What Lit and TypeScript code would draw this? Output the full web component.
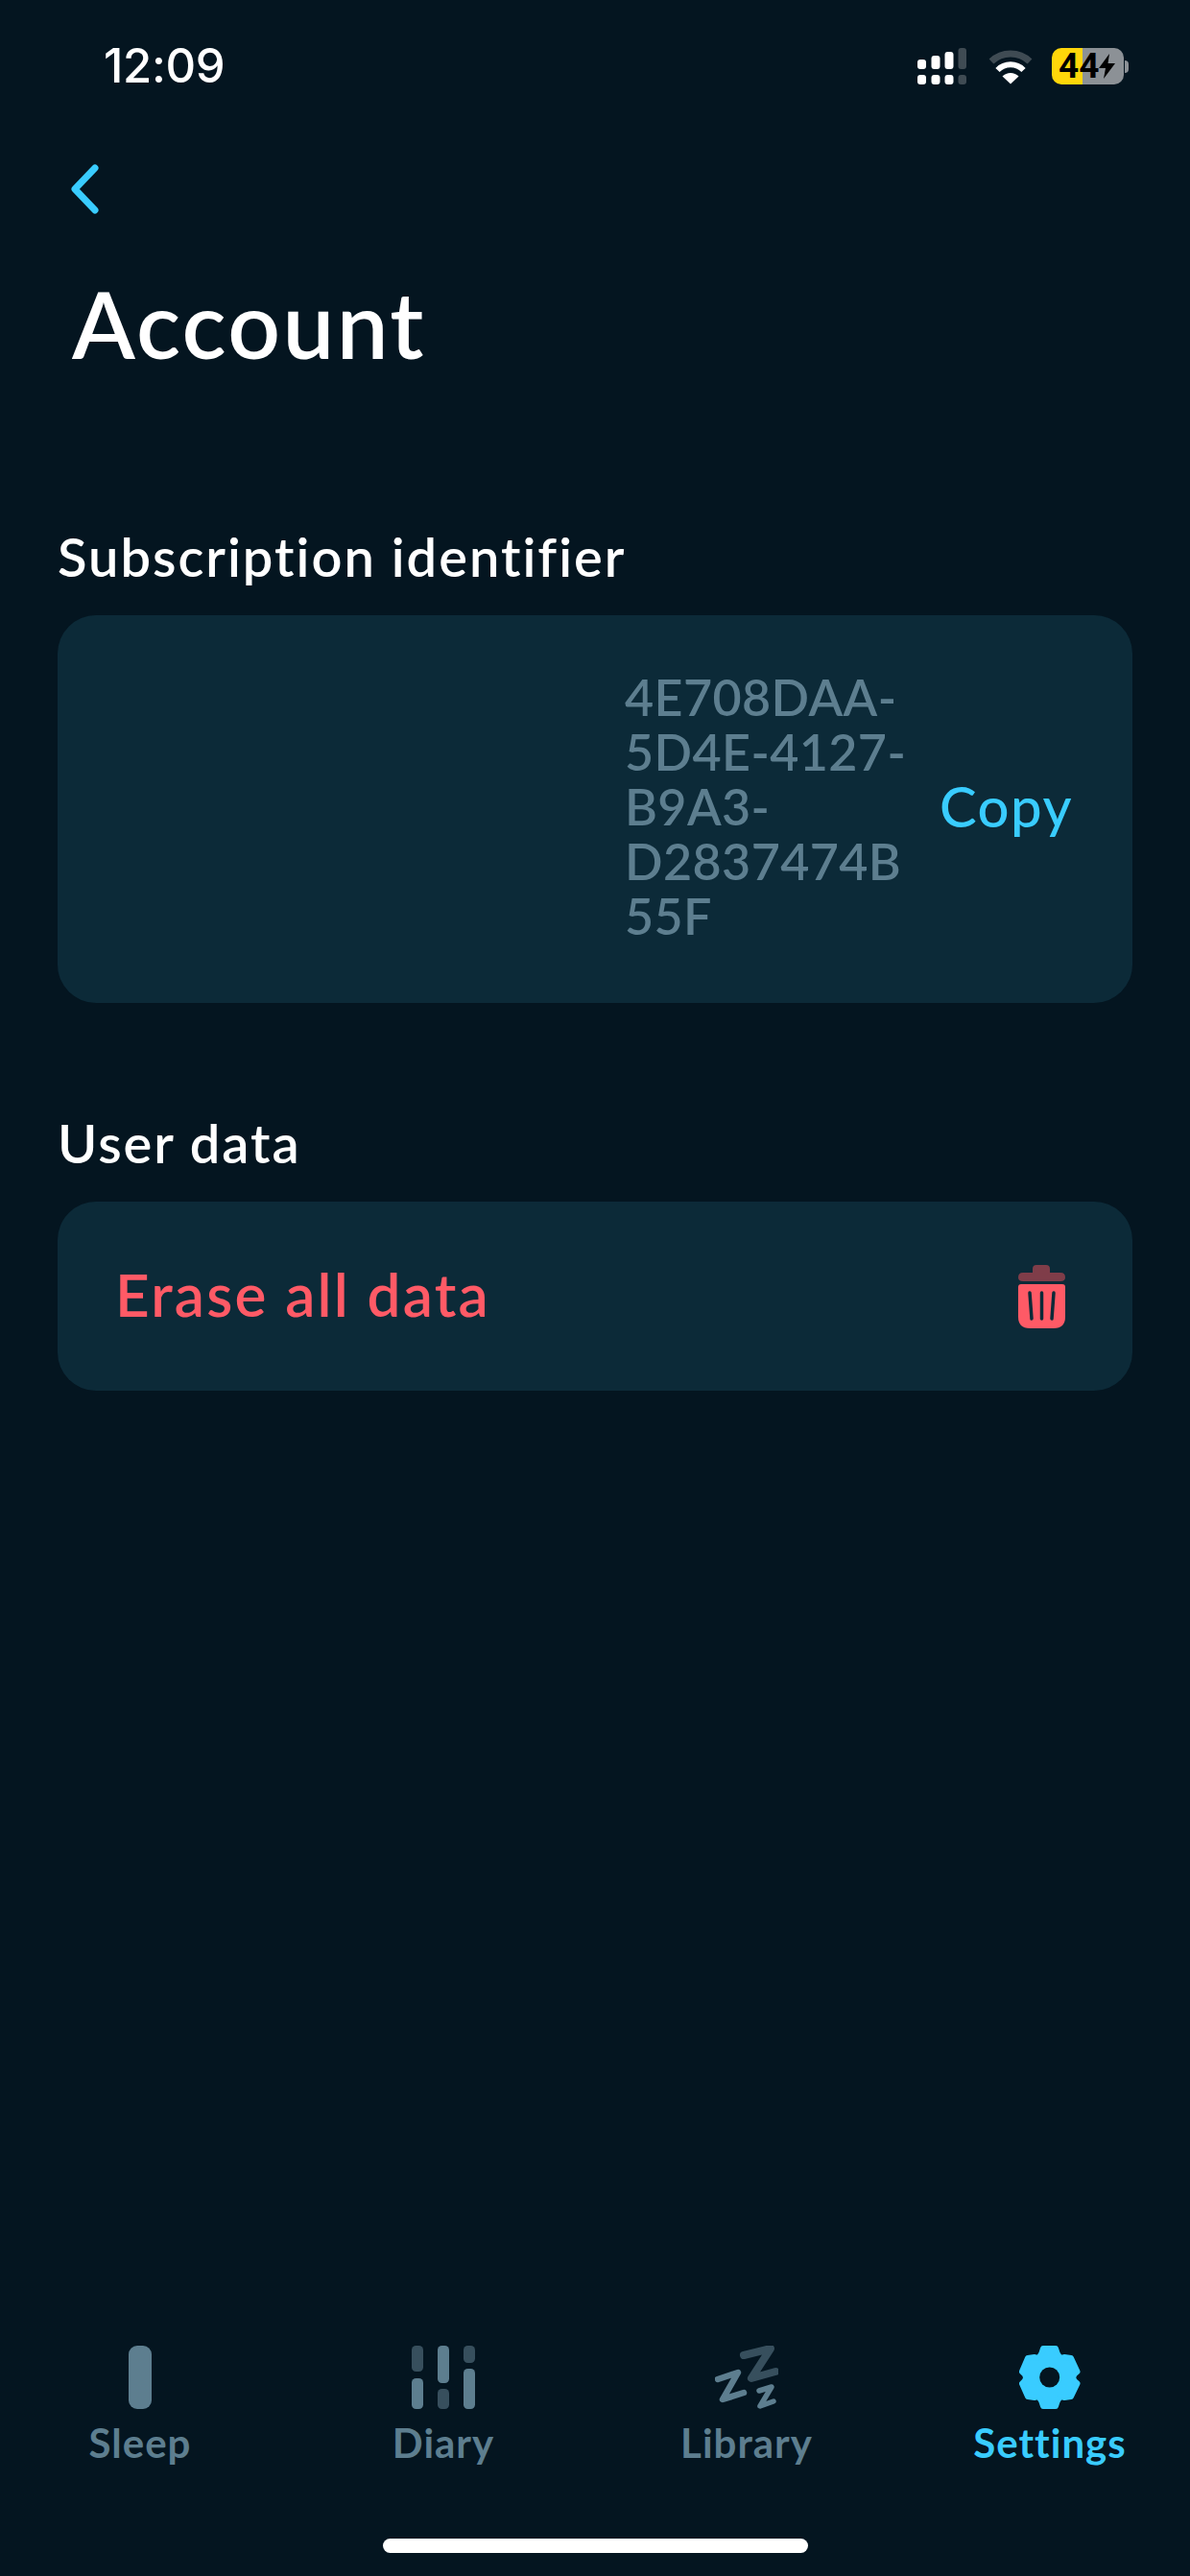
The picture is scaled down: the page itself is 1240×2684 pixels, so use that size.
import {LitElement, html, css, svg, unsafeCSS} from 'lit';
import {customElement} from 'lit/decorators.js';

const MUTED = '#5d7e8f';
const DIM = '#374f5d';
const ACCENT = '#39ccff';

const ICONS: Record<string, unknown> = {
  sleep: svg`<rect x="21" y="0" width="24" height="66" rx="9" fill="${MUTED}"/>`,
  diary: svg`
    <rect x="6" y="0" width="12" height="27" rx="4.5" fill="${DIM}"/>
    <rect x="6" y="34" width="12" height="32" rx="4.5" fill="${MUTED}"/>
    <rect x="33" y="0" width="12" height="39" rx="4.5" fill="${MUTED}"/>
    <rect x="33" y="45" width="12" height="21" rx="4.5" fill="${DIM}"/>
    <rect x="60" y="0" width="12" height="18" rx="4.5" fill="${DIM}"/>
    <rect x="60" y="24" width="12" height="42" rx="4.5" fill="${MUTED}"/>`,
  library: svg`
    <g fill="none" stroke-linecap="round" stroke-linejoin="round">
      <path d="M30 10 L58 3 L38 34 L63 27" stroke="${DIM}" stroke-width="8"/>
      <path d="M3 35 L24 28 L8 56 L30 49" stroke="${MUTED}" stroke-width="6.5"/>
      <path d="M46 47 L59 43 L47 63 L61 58" stroke="${MUTED}" stroke-width="5.5"/>
    </g>`,
  settings: svg`
    <path d="M25 3 H38 Q41 15 47 12 L54 13 L60.5 27 Q52 33 60.5 39.5 L54 53 L47 54 Q41 51 38 63 H25 Q22 51 16 54 L9 53 L3 39.5 Q11 33 3 27 L9 13 L16 12 Q22 15 25 3 Z"
      fill="${ACCENT}" stroke="${ACCENT}" stroke-width="6" stroke-linejoin="round"/>
    <circle cx="31.7" cy="33" r="10.5" fill="#041520"/>`,
};

const TABS = [
  {id: 'sleep', label: 'Sleep', box: '0 0 66 66', w: 66},
  {id: 'diary', label: 'Diary', box: '0 0 78 66', w: 78},
  {id: 'library', label: 'Library', box: '0 0 66 66', w: 66},
  {id: 'settings', label: 'Settings', box: '0 0 64 66', w: 64, active: true},
];

@customElement('app-root')
export class AppRoot extends LitElement {
  static styles = css`
    :host {
      display: block;
      font-family: Lato, 'Noto Sans', sans-serif;
    }
    .screen {
      display: flex;
      flex-direction: column;
      height: 2684px;
      background: #041520;
      color: #fff;
      overflow: hidden;
    }

    .status {
      display: flex;
      align-items: center;
      height: 48px;
      padding: 45px 0 0 108px;
    }
    .time {
      font-family: Inter, sans-serif;
      font-size: 49px;
      font-weight: 500;
      line-height: 48px;
      letter-spacing: -0.3px;
    }
    .status-icons {
      display: flex;
      align-items: center;
      margin-left: auto;
      margin-right: 64px;
    }
    .signal {
      display: block;
      margin-right: 22px;
    }
    .wifi {
      display: block;
      margin-right: 19px;
    }
    .battery {
      display: flex;
      align-items: center;
      justify-content: flex-start;
      width: 75px;
      height: 38px;
      padding-left: 7px;
      box-sizing: border-box;
      border-radius: 10px;
      background: linear-gradient(90deg, #ffd60a 43%, #8c9196 43%);
      color: #000;
      font-family: Roboto, sans-serif;
      font-size: 37px;
      font-weight: 700;
      line-height: 38px;
    }
    .nub {
      width: 4px;
      height: 13px;
      margin-left: 1px;
      border-radius: 0 4px 4px 0;
      background: #8c9196;
    }

    .back {
      display: block;
      margin: 78px 0 0 73px;
    }
    h1 {
      margin: 59px 0 0 75px;
      font-size: 96px;
      font-weight: 600;
      line-height: 110px;
      letter-spacing: 2.4px;
    }

    .section {
      padding: 0 60px;
    }
    .section.first {
      margin-top: 156px;
    }
    .section.second {
      margin-top: 114px;
    }
    .section-label {
      height: 93px;
      font-size: 56px;
      font-weight: 600;
      line-height: 64px;
      letter-spacing: 2px;
    }
    .card {
      background: #0c2a38;
      border-radius: 40px;
    }
    .id-card {
      display: flex;
      align-items: center;
      justify-content: flex-end;
      height: 404px;
      padding: 0 62px 6px 0;
      box-sizing: border-box;
    }
    .id-value {
      width: 328px;
      color: ${unsafeCSS(MUTED)};
      font-size: 52px;
      font-weight: 600;
      line-height: 57px;
      letter-spacing: 0.4px;
    }
    .copy {
      color: ${unsafeCSS(ACCENT)};
      font-size: 58px;
      font-weight: 500;
      line-height: 64px;
      letter-spacing: 1.5px;
    }
    .erase-card {
      display: flex;
      align-items: center;
      justify-content: space-between;
      height: 197px;
      padding: 0 70px 0 60px;
      color: #ff5a66;
      font-size: 62px;
      font-weight: 600;
      letter-spacing: 2.2px;
    }
    .erase-label {
      margin-bottom: 5px;
    }
    .trash {
      display: block;
    }

    .tabs {
      display: grid;
      grid-template-columns: repeat(4, 316px);
      justify-content: center;
      margin-top: auto;
    }
    .tab {
      display: flex;
      flex-direction: column;
      align-items: center;
      color: ${unsafeCSS(MUTED)};
      font-size: 42px;
      font-weight: 700;
      line-height: 50px;
      letter-spacing: 1px;
    }
    .tab.active {
      color: ${unsafeCSS(ACCENT)};
    }
    .tab svg {
      display: block;
      margin-bottom: 10px;
    }

    .home-row {
      display: flex;
      justify-content: center;
      padding: 75px 0 24px;
    }
    .home {
      width: 443px;
      height: 15px;
      border-radius: 8px;
      background: #fff;
    }
  `;

  renderStatus() {
    return html`
      <div class="status">
        <span class="time">12:09</span>
        <div class="status-icons">
          <svg class="signal" width="51" height="38" viewBox="0 0 51 38">
            <g fill="#fff">
              <rect x="0" y="12" width="9" height="10" rx="3"/>
              <rect x="14.5" y="8" width="9" height="14" rx="3"/>
              <rect x="28.5" y="4" width="9" height="18" rx="3"/>
              <rect x="0" y="28" width="9" height="10" rx="3"/>
              <rect x="14.5" y="28" width="9" height="10" rx="3"/>
              <rect x="28.5" y="28" width="9" height="10" rx="3"/>
            </g>
            <g fill="#3f4b53">
              <rect x="42.5" y="0" width="8.5" height="22" rx="3"/>
              <rect x="42.5" y="28" width="8.5" height="10" rx="3"/>
            </g>
          </svg>
          <svg class="wifi" width="48" height="37" viewBox="0 0 48 37">
            <path d="M4 13 A29 29 0 0 1 44 13" fill="none" stroke="#3f4b53" stroke-width="7"/>
            <path d="M10.5 22 A19 19 0 0 1 37.5 22" fill="none" stroke="#fff" stroke-width="6"/>
            <path d="M24 36.5 L15.5 28.5 A12 12 0 0 1 32.5 28.5 Z" fill="#fff"/>
          </svg>
          <div class="battery">
            44<svg width="17" height="26" viewBox="0 0 17 26">
              <path d="M11 0 L0 15 H7 L5 26 L17 10 H9.5 Z" fill="#000"/>
            </svg>
          </div>
          <div class="nub"></div>
        </div>
      </div>
    `;
  }

  render() {
    return html`
      <div class="screen">
        ${this.renderStatus()}
        <svg class="back" width="30" height="52" viewBox="0 0 30 52">
          <path d="M26 4 L5 26 L26 48" fill="none" stroke="${ACCENT}" stroke-width="7"
            stroke-linecap="round" stroke-linejoin="round"/>
        </svg>
        <h1>Account</h1>

        <div class="section first">
          <div class="section-label">Subscription identifier</div>
          <div class="card id-card">
            <div class="id-value">4E708DAA-<br>5D4E-4127-<br>B9A3-<br>D2837474B<br>55F</div>
            <div class="copy">Copy</div>
          </div>
        </div>

        <div class="section second">
          <div class="section-label">User data</div>
          <div class="card erase-card">
            <span class="erase-label">Erase all data</span>
            <svg class="trash" width="49" height="66" viewBox="0 0 49 66">
              <path d="M15 8 V4 Q15 0 19 0 H29 Q33 0 33 4 V8 H44 Q49 8 49 13 Q49 17 44 17 H5 Q0 17 0 13 Q0 8 5 8 Z" fill="#7f3d49"/>
              <path d="M3 20 H46 Q49 20 49 23 V54 Q49 66 37 66 H12 Q0 66 0 54 V23 Q0 20 3 20 Z" fill="#ff5a66"/>
              <g stroke="#0c2a38" stroke-width="3.5" stroke-linecap="round">
                <path d="M12 29 L14 56"/>
                <path d="M24.5 29 V56"/>
                <path d="M37 29 L35 56"/>
              </g>
            </svg>
          </div>
        </div>

        <div class="tabs">
          ${TABS.map(
            (tab) => html`
              <div class="tab ${tab.active ? 'active' : ''}">
                <svg width=${tab.w} height="66" viewBox=${tab.box}>${ICONS[tab.id]}</svg>
                ${tab.label}
              </div>
            `
          )}
        </div>
        <div class="home-row"><div class="home"></div></div>
      </div>
    `;
  }
}
